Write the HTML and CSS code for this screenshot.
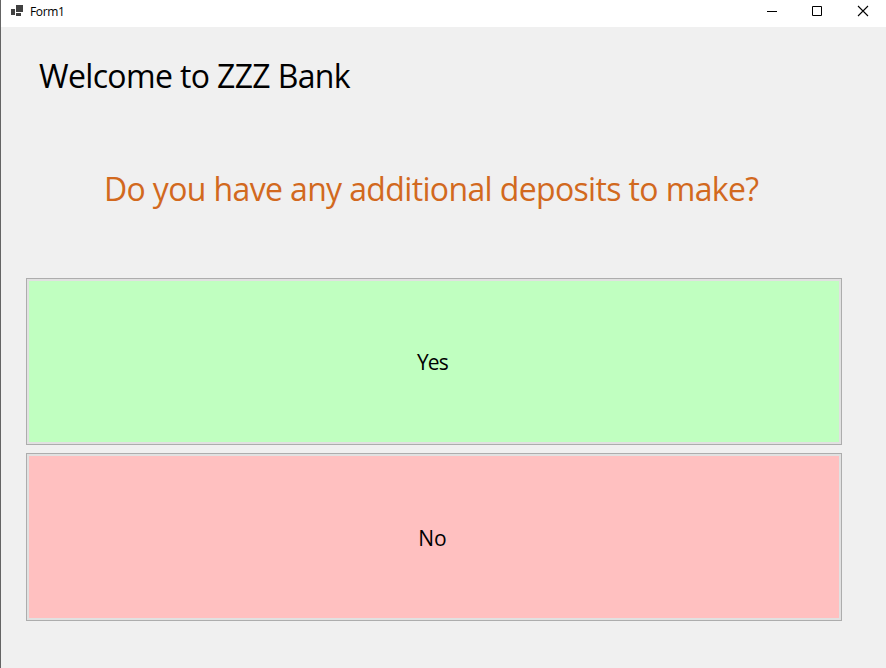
FILE: index.html
```html
<!DOCTYPE html>
<html lang="en">
<head>
<meta charset="utf-8">
<title>Form1</title>
<link rel="stylesheet" href="styles.css">
</head>
<body>
<div class="window">
  <header class="titlebar">
    <svg class="app-icon" width="13" height="12" viewBox="0 0 13 12" shape-rendering="crispEdges"><path fill="#414141" d="M5 0h7v7H5zM0 4h4v6H0zM5 8h5v3H5z"/></svg>
    <span class="caption">Form1</span>
    <div class="controls">
      <svg width="10" height="10" viewBox="0 0 10 10"><path d="M0 5.5h10" stroke="#000"/></svg>
      <svg width="10" height="10" viewBox="0 0 10 10"><path d="M.5.5h9v9h-9z" fill="none" stroke="#000"/></svg>
      <svg class="close" width="10" height="10" viewBox="0 0 10 10"><path d="M0 0l10 10M10 0L0 10" stroke="#000" stroke-width="1.1"/></svg>
    </div>
  </header>
  <main class="form">
    <h1 class="welcome">Welcome to ZZZ Bank</h1>
    <p class="question">Do you have any additional deposits to make?</p>
    <div class="choices">
      <button class="choice yes"><span>Yes</span></button>
      <button class="choice no"><span>No</span></button>
    </div>
  </main>
</div>
</body>
</html>
```
FILE: styles.css
```css
* { box-sizing: border-box; }
body { margin: 0; font-family: "Open Sans", "Noto Sans", sans-serif; color: #000; }
.window {
  height: 668px;
  display: flex;
  flex-direction: column;
  background: #f0f0f0;
  border-left: 1px solid #646464;
  overflow: hidden;
}
.titlebar {
  height: 27px;
  flex: none;
  display: flex;
  align-items: flex-start;
  padding: 5px 18px 0 10px;
  background: #fff;
}
.app-icon { flex: none; }
.caption { margin-left: 6px; font-size: 12px; line-height: 14px; letter-spacing: -0.35px; }
.controls { margin: 1px 0 0 auto; display: flex; gap: 35px; }
.controls svg { display: block; overflow: visible; }
.controls .close { margin-left: 1px; }
.form { padding: 25px 44px 0 25px; }
.welcome, .question { margin: 0; font-weight: 400; font-size: 32px; line-height: 48px; letter-spacing: -0.64px; white-space: nowrap; }
.welcome { padding-left: 13px; }
.question { margin-top: 65px; padding-left: 78px; color: #d2691e; }
.choices { margin-top: 65px; display: grid; grid-template-rows: 167px 168px; gap: 8px; }
.choice {
  border: 1px solid #adadad;
  padding: 0 3px 0 0;
  box-shadow: inset 0 0 0 2px #e1e1e1;
  font: 400 21px/28px "Open Sans", "Noto Sans", sans-serif;
  color: #000;
}
.yes { background: #c0ffc0; letter-spacing: -0.8px; }
.no { background: #ffc0c0; padding-top: 2px; }
```
